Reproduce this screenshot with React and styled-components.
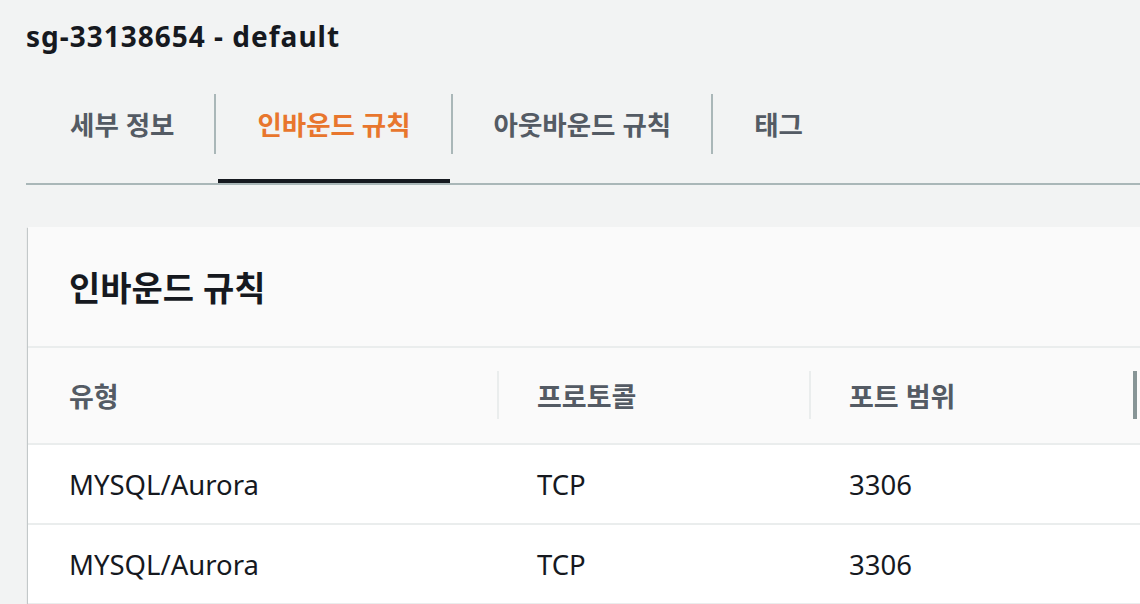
import React from "react";
import styled, { createGlobalStyle } from "styled-components";

const GlobalStyle = createGlobalStyle`
  html, body {
    margin: 0;
    padding: 0;
    background: #f2f3f3;
    font-family: "Noto Sans", "Noto Sans CJK KR", sans-serif;
    color: #16191f;
    overflow: hidden;
  }
`;

const Page = styled.div`
  padding: 0 0 0 26px;
  width: 1140px;
  box-sizing: border-box;
`;

const Title = styled.h1`
  margin: 0;
  padding-top: 17px;
  font-size: 28px;
  line-height: 38px;
  font-weight: 700;
  letter-spacing: 1px;
  color: #16191f;
`;

const TabList = styled.div`
  display: flex;
  align-items: center;
  margin-top: 8px;
  border-bottom: 2px solid #aab7b8;
`;

const Tab = styled.div`
  position: relative;
  display: flex;
  align-items: center;
  height: 120px;
  border-left: ${(p) => (p.$first ? "none" : "2px solid transparent")};

  &::before {
    content: "";
    display: ${(p) => (p.$first ? "none" : "block")};
    position: absolute;
    left: -2px;
    top: 31px;
    width: 2px;
    height: 60px;
    background: #aab7b8;
  }

  &::after {
    content: "";
    display: ${(p) => (p.$active ? "block" : "none")};
    position: absolute;
    left: 2px;
    right: 1px;
    bottom: 0;
    height: 4px;
    background: #16191f;
  }
`;

const TabLabel = styled.span`
  padding: 0 40px 0 ${(p) => (p.$first ? "44px" : "41px")};
  font-size: 26.5px;
  font-weight: 700;
  color: ${(p) => (p.$active ? "#e8762d" : "#545b64")};
  white-space: nowrap;
`;

const Card = styled.div`
  margin-top: 42px;
  margin-left: 2px;
  margin-right: -40px;
  background: #ffffff;
  box-shadow: 0 1px 1px 0 rgba(0, 28, 36, 0.3), 1px 1px 1px 0 rgba(0, 28, 36, 0.15),
    -1px 1px 1px 0 rgba(0, 28, 36, 0.15);
`;

const CardHeader = styled.div`
  display: flex;
  align-items: center;
  height: 119px;
  padding-left: 41px;
  background: #fafafa;
  border-bottom: 2px solid #eaeded;
`;

const CardTitle = styled.h2`
  margin: 0;
  font-size: 34px;
  font-weight: 700;
  color: #16191f;
`;

const Table = styled.div`
  display: grid;
  grid-template-columns: 469px 312px 324px 1fr;
`;

const HeadCell = styled.div`
  position: relative;
  display: flex;
  align-items: center;
  height: 95px;
  padding-left: ${(p) => (p.$first ? "41px" : "40px")};
  background: #fafafa;
  border-bottom: 2px solid #eaeded;
  font-size: 27px;
  font-weight: 700;
  color: #545b64;

  &::before {
    content: "";
    display: ${(p) => (p.$first ? "none" : "block")};
    position: absolute;
    left: 0;
    top: 23px;
    width: ${(p) => (p.$dark ? "4px" : "2px")};
    height: 48px;
    background: ${(p) => (p.$dark ? "#879596" : "#eaeded")};
  }
`;

const Cell = styled.div`
  display: flex;
  align-items: center;
  height: 78px;
  padding-left: ${(p) => (p.$first ? "41px" : "40px")};
  border-bottom: 2px solid #eaeded;
  font-size: 27.5px;
  color: #16191f;
  white-space: nowrap;
`;

const tabs = ["세부 정보", "인바운드 규칙", "아웃바운드 규칙", "태그"];
const columns = ["유형", "프로토콜", "포트 범위", ""];
const rows = [
  ["MYSQL/Aurora", "TCP", "3306", ""],
  ["MYSQL/Aurora", "TCP", "3306", ""],
];

export default function App() {
  return (
    <Page>
      <GlobalStyle />
      <Title>sg-33138654 - default</Title>
      <TabList>
        {tabs.map((t, i) => (
          <Tab key={t} $first={i === 0} $active={i === 1}>
            <TabLabel $first={i === 0} $active={i === 1}>
              {t}
            </TabLabel>
          </Tab>
        ))}
      </TabList>
      <Card>
        <CardHeader>
          <CardTitle>인바운드 규칙</CardTitle>
        </CardHeader>
        <Table>
          {columns.map((c, i) => (
            <HeadCell key={i} $first={i === 0} $dark={i === 3}>
              {c}
            </HeadCell>
          ))}
          {rows.map((r, ri) =>
            r.map((v, ci) => (
              <Cell key={ri + "-" + ci} $first={ci === 0}>
                {v}
              </Cell>
            ))
          )}
        </Table>
      </Card>
    </Page>
  );
}
